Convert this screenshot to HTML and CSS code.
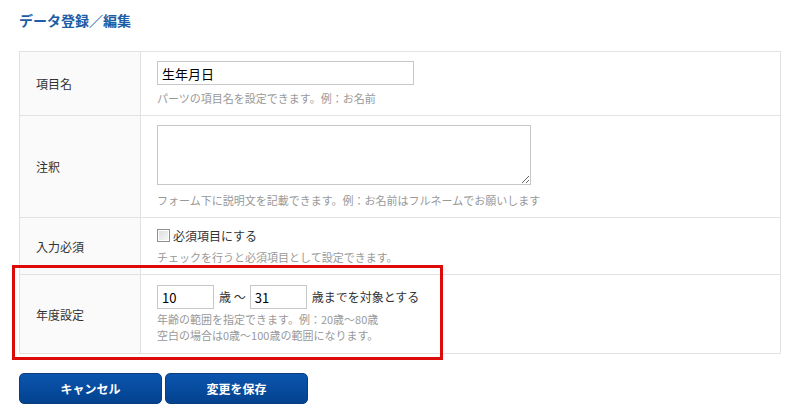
FILE: index.html
```html
<!DOCTYPE html>
<html lang="ja">
<head>
    <meta charset="UTF-8">
    <meta name="viewport" content="width=device-width, initial-scale=1.0">
    <title>データ登録／編集</title>
    <link rel="stylesheet" href="styles.css">
</head>
<body>
    <div class="page">
        <h1 class="title">データ登録／編集</h1>

        <div class="form-wrap">
            <table class="form-table">
                <tr class="row-name">
                    <th>項目名</th>
                    <td>
                        <input type="text" class="text-input" value="生年月日">
                        <p class="help">パーツの項目名を設定できます。例：お名前</p>
                    </td>
                </tr>
                <tr class="row-note">
                    <th>注釈</th>
                    <td>
                        <textarea class="note-input"></textarea>
                        <p class="help">フォーム下に説明文を記載できます。例：お名前はフルネームでお願いします</p>
                    </td>
                </tr>
                <tr class="row-required">
                    <th>入力必須</th>
                    <td>
                        <label class="check"><input type="checkbox"> 必須項目にする</label>
                        <p class="help">チェックを行うと必須項目として設定できます。</p>
                    </td>
                </tr>
                <tr class="row-age">
                    <th>年度設定</th>
                    <td>
                        <div class="age-line">
                            <input type="text" class="age-input" value="10">
                            <span>歳 ～</span>
                            <input type="text" class="age-input" value="31">
                            <span>歳までを対象とする</span>
                        </div>
                        <p class="help lines">年齢の範囲を指定できます。例：20歳～80歳<br>空白の場合は0歳～100歳の範囲になります。</p>
                    </td>
                </tr>
            </table>
            <div class="highlight"></div>
        </div>

        <div class="actions">
            <button class="btn">キャンセル</button>
            <button class="btn">変更を保存</button>
        </div>
    </div>
</body>
</html>
```

FILE: styles.css
```css
body {
    margin: 0;
    font-family: "Noto Sans CJK JP", "Noto Sans", sans-serif;
    font-size: 12px;
    color: #333;
    background: #fff;
}
.page {
    padding: 10px 11px 0 19px;
}
.title {
    margin: 0 0 21px;
    font-size: 14px;
    line-height: 20px;
    font-weight: bold;
    color: #1d5ca6;
}
.form-wrap {
    position: relative;
}
.form-table {
    width: 762px;
    border-collapse: collapse;
}
.form-table th,
.form-table td {
    border: 1px solid #e2e2e2;
}
.form-table th {
    width: 88px;
    padding: 0 16px;
    background: #fafafa;
    text-align: left;
    font-weight: normal;
    font-size: 12px;
    color: #333;
}
.form-table td {
    padding: 8px 16px 8px 16px;
    background: #fff;
}
.text-input,
.age-input {
    box-sizing: border-box;
    height: 24px;
    padding: 2px 4px;
    border: 1px solid #c8c8c8;
    font-family: inherit;
    font-size: 13px;
    color: #000;
    margin: 1px 0 0;
}
.text-input {
    width: 257px;
    display: block;
}
.note-input {
    display: block;
    box-sizing: border-box;
    width: 374px;
    height: 60px;
    border: 1px solid #c8c8c8;
    margin: 1px 0 0;
}
.help {
    margin: 4px 0 0;
    font-size: 11px;
    line-height: 18px;
    color: #999;
}
.row-note .help {
    margin-top: 6px;
}
.help.lines {
    margin-top: 2px;
    line-height: 16px;
}
.row-age td {
    padding-bottom: 10px;
}
.check {
    display: flex;
    align-items: center;
    gap: 3px;
    height: 18px;
    font-size: 12px;
}
.check input {
    appearance: none;
    margin: 0;
    width: 13px;
    height: 13px;
    border: 1px solid #8e8f8f;
    background: linear-gradient(135deg, #dcdcdc, #f8f8f8);
    box-shadow: inset 0 0 0 1px #fff;
}
.age-line {
    display: flex;
    align-items: center;
    gap: 5px;
    height: 26px;
    font-size: 12px;
}
.age-input {
    width: 57px;
    margin: 2px 0 0;
}
.age-line span + .age-input {
    margin-left: -1px;
}
.highlight {
    position: absolute;
    left: -7px;
    top: 214px;
    width: 425px;
    height: 89px;
    border: 3px solid #dd0a0a;
}
.actions {
    display: flex;
    gap: 3px;
    margin-top: 19px;
}
.btn {
    width: 143px;
    height: 31px;
    border: 1px solid #0b3c7c;
    border-radius: 5px;
    background: linear-gradient(#0b55ae, #03428f);
    color: #fff;
    font-family: inherit;
    font-size: 12px;
    font-weight: bold;
    cursor: pointer;
}
```
